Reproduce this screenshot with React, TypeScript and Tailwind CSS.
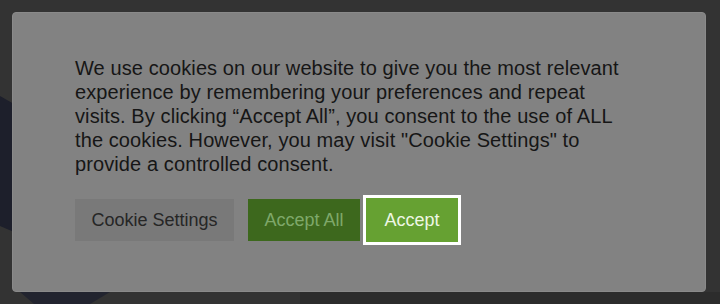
export default function App() {
    return (
        <div className="relative h-[304px] w-[720px] overflow-hidden bg-[#333333] pl-3 pr-[14px] pt-3 font-['Liberation_Sans',Arial,sans-serif]">
            {/* dimmed page picture behind the overlay */}
            <svg className="absolute inset-0" width="720" height="304" viewBox="0 0 720 304">
                <path d="M0 96 L14 104 L14 232 L0 226 Z" fill="#1d1f2b" />
                <path d="M20 292 L110 292 L90 304 L34 304 Z" fill="#22242f" />
                <rect x="300" y="292" width="420" height="12" fill="#2c2c2c" />
            </svg>

            <div className="relative h-[280px] rounded-[4px] border border-[#8a8a8a] bg-[#828282] pl-[62px] pt-[43px]">
                <p className="w-[560px] text-[20px] leading-[24px] tracking-[0.1px] text-[#161616]">
                    We use cookies on our website to give you the most relevant
                    experience by remembering your preferences and repeat
                    visits. By clicking “Accept All”, you consent to the use of ALL
                    the cookies. However, you may visit "Cookie Settings" to
                    provide a controlled consent.
                </p>
                <div className="mt-[19px] flex items-center">
                    <button className="h-[42px] w-[159px] bg-[#797979] text-[18px] text-[#262626]">
                        Cookie Settings
                    </button>
                    <button className="ml-[14px] h-[42px] w-[112px] bg-[#3d681d] text-[18px] text-[#7fa86a]">
                        Accept All
                    </button>
                    <button className="ml-[3px] h-[50px] w-[98px] border-[3px] border-white bg-[#66a132] text-[18px] text-[#eef7e4]">
                        Accept
                    </button>
                </div>
            </div>
        </div>
    );
}
